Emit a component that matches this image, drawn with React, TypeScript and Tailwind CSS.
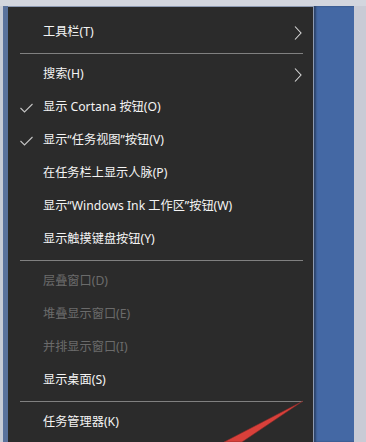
import React from 'react'

type Item =
  | { kind: 'sep' }
  | { kind: 'item'; label: string; checked?: boolean; disabled?: boolean; submenu?: boolean }

const items: Item[] = [
  { kind: 'item', label: '工具栏(T)', submenu: true },
  { kind: 'sep' },
  { kind: 'item', label: '搜索(H)', submenu: true },
  { kind: 'item', label: '显示 Cortana 按钮(O)', checked: true },
  { kind: 'item', label: '显示“任务视图”按钮(V)', checked: true },
  { kind: 'item', label: '在任务栏上显示人脉(P)' },
  { kind: 'item', label: '显示“Windows Ink 工作区”按钮(W)' },
  { kind: 'item', label: '显示触摸键盘按钮(Y)' },
  { kind: 'sep' },
  { kind: 'item', label: '层叠窗口(D)', disabled: true },
  { kind: 'item', label: '堆叠显示窗口(E)', disabled: true },
  { kind: 'item', label: '并排显示窗口(I)', disabled: true },
  { kind: 'item', label: '显示桌面(S)' },
  { kind: 'sep' },
  { kind: 'item', label: '任务管理器(K)' },
]

function Check() {
  return (
    <svg width="13" height="10" viewBox="0 0 13 10" fill="none">
      <polyline points="0.5,5 4.5,9 12.5,1" stroke="#c4c4c4" strokeWidth="1.1" />
    </svg>
  )
}

function Chevron() {
  return (
    <svg width="8" height="14" viewBox="0 0 8 14" fill="none">
      <polyline points="1,0.5 7,7 1,13.5" stroke="#d8d8d8" strokeWidth="1.1" />
    </svg>
  )
}

export default function App() {
  return (
    <div
      className="relative w-[366px] h-[442px] overflow-hidden bg-[#cbced8] flex flex-col"
      style={{ fontFamily: '"Segoe UI", "Noto Sans", "Noto Sans CJK SC", sans-serif' }}
    >
      <div className="h-[6px] shrink-0 bg-[#d3d6de]" />
      <div className="flex flex-1 min-h-0">
        <div className="w-[3px] bg-[#c8ccd6]" />
        <div className="w-[5px] bg-[#5a729c]" />
        <div className="w-[306px] bg-[#2b2b2b] border-t border-r border-[#8d9ab2] pt-[9px]">
          {items.map((it, i) =>
            it.kind === 'sep' ? (
              <div key={i} className="h-[9px] flex items-center pl-[12px] pr-[10px]">
                <div className="h-px w-full bg-[#808080]" />
              </div>
            ) : (
              <div key={i} className="h-[33px] flex items-center relative pl-[35px] pr-[11px]">
                {it.checked && (
                  <span className="absolute left-[12px] top-[12px]">
                    <Check />
                  </span>
                )}
                <span
                  className={`flex-1 text-[12.2px] leading-none whitespace-nowrap ${
                    it.disabled ? 'text-[#6b6b6b]' : 'text-[#f4f4f4]'
                  }`}
                >
                  {it.label}
                </span>
                {it.submenu && <Chevron />}
              </div>
            )
          )}
        </div>
        <div className="w-[40px] bg-[#4468a4] shadow-[inset_2px_0_2px_rgba(0,0,0,0.35)]" />
        <div className="flex-1 bg-[#c9cbd5]" />
      </div>
      <svg className="absolute inset-0 pointer-events-none" width="366" height="442" viewBox="0 0 366 442">
        <polygon points="303,401 242,442 224,442" fill="#d8403a" stroke="#7a2a28" strokeWidth="0.6" />
      </svg>
    </div>
  )
}
